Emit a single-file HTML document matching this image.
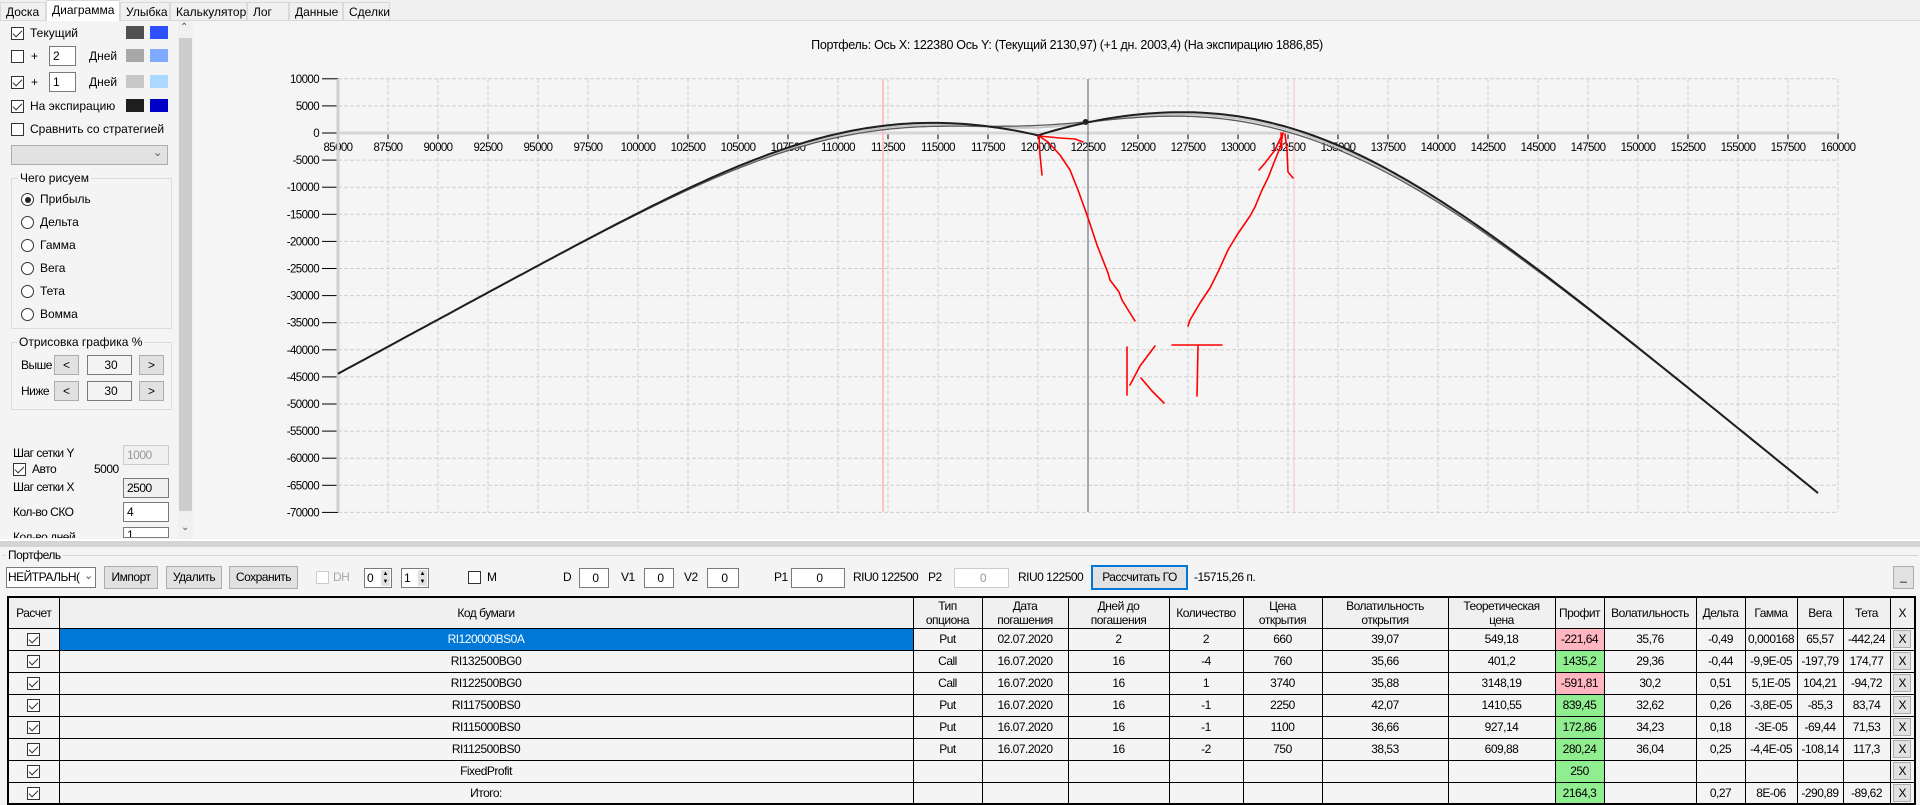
<!DOCTYPE html>
<html><head><meta charset="utf-8">
<style>
*{box-sizing:border-box;margin:0;padding:0}
body{width:1920px;height:803px;overflow:hidden;background:#f0f0f0;font-family:"Liberation Sans",sans-serif;font-size:12px;color:#000;position:relative}
.a{position:absolute;white-space:nowrap}
.n{font-family:"Liberation Sans Narrow","Liberation Sans",sans-serif;letter-spacing:-0.5px}
.cb{position:absolute;width:13px;height:13px;border:1px solid #333;background:#fff}
.cb.on::after{content:"";position:absolute;left:3px;top:0px;width:4px;height:8px;border:solid #333;border-width:0 1.5px 1.5px 0;transform:rotate(45deg)}
.inp{position:absolute;background:#fff;border:1px solid #7a7a7a;padding-left:3px;line-height:18px}
.btn{position:absolute;background:#e1e1e1;border:1px solid #adadad;text-align:center}
.rad{position:absolute;width:13px;height:13px;border:1px solid #333;border-radius:50%;background:#fff}
.rad.on::after{content:"";position:absolute;left:2.5px;top:2.5px;width:6px;height:6px;border-radius:50%;background:#222}
.grp{position:absolute;border:1px solid #dcdcdc}
.tab{position:absolute;top:2px;height:18px;border:1px solid #d9d9d9;border-bottom:none;background:#f0f0f0;padding:2px 5px 0 5px;font-size:12px}
table{border-collapse:collapse;position:absolute;left:7px;top:596px;width:1907px;table-layout:fixed;background:#f4f4f4;border:2px solid #000}
td{border:1px solid #000;height:22px;text-align:center;font-family:"Liberation Sans Narrow","Liberation Sans",sans-serif;letter-spacing:-0.5px;font-size:12px;padding:0;overflow:hidden;white-space:nowrap}
tr.h td{height:31px;background:#f0f0f0;line-height:14px}
.pk{background:#ffb6c1}.gr{background:#90ee90}
.sel{background:#0078d7;color:#fff}
.x{padding:1px}
.x span{display:block;background:#e1e1e1;border:1px solid #adadad;height:18px;line-height:17px;width:18px;margin:0 auto}
.tc{display:inline-block;width:13px;height:13px;border:1px solid #333;position:relative;vertical-align:middle;background:#fff}
.tc::after{content:"";position:absolute;left:3px;top:0;width:4px;height:8px;border:solid #333;border-width:0 1.5px 1.5px 0;transform:rotate(45deg)}
</style></head><body>

<div class="a" style="left:0;top:20px;width:1920px;height:1px;background:#d9d9d9"></div>
<div class="tab" style="left:0;width:46px">Доска</div>
<div class="tab" style="left:46px;top:0;height:21px;width:74px;background:#fff;z-index:2">Диаграмма</div>
<div class="tab" style="left:120px;width:50px">Улыбка</div>
<div class="tab" style="left:170px;width:77px">Калькулятор</div>
<div class="tab" style="left:247px;width:42px">Лог</div>
<div class="tab" style="left:289px;width:54px">Данные</div>
<div class="tab" style="left:343px;width:47px">Сделки</div>

<div class="a" style="left:193px;top:21px;width:1727px;height:518px;background:#f5f5f5"></div>
<div class="a" style="left:0;top:21px;width:178px;height:518px;background:#f4f4f4"></div>
<div class="a" style="left:178px;top:21px;width:15px;height:518px;background:#f0f0f0"></div>
<div class="a" style="left:179px;top:38px;width:13px;height:473px;background:#cdcdcd"></div>
<div class="a" style="left:180px;top:22px;font-size:10px;color:#555">&#8963;</div>
<div class="a" style="left:181px;top:522px;font-size:10px;color:#555">&#8964;</div>

<div class="cb on" style="left:11px;top:27px"></div><div class="a" style="left:30px;top:26px">Текущий</div>
<div class="a" style="left:126px;top:26px;width:18px;height:13px;background:#505050"></div><div class="a" style="left:150px;top:26px;width:18px;height:13px;background:#2f50ff"></div>
<div class="cb" style="left:11px;top:50px"></div><div class="a" style="left:31px;top:49px">+</div>
<div class="inp" style="left:49px;top:46px;width:27px;height:20px">2</div><div class="a" style="left:89px;top:49px">Дней</div>
<div class="a" style="left:126px;top:49px;width:18px;height:13px;background:#a8a8a8"></div><div class="a" style="left:150px;top:49px;width:18px;height:13px;background:#80aaff"></div>
<div class="cb on" style="left:11px;top:76px"></div><div class="a" style="left:31px;top:75px">+</div>
<div class="inp" style="left:49px;top:72px;width:27px;height:20px">1</div><div class="a" style="left:89px;top:75px">Дней</div>
<div class="a" style="left:126px;top:75px;width:18px;height:13px;background:#c8c8c8"></div><div class="a" style="left:150px;top:75px;width:18px;height:13px;background:#aad8ff"></div>
<div class="cb on" style="left:11px;top:100px"></div><div class="a" style="left:30px;top:99px">На экспирацию</div>
<div class="a" style="left:126px;top:99px;width:18px;height:13px;background:#1e1e1e"></div><div class="a" style="left:150px;top:99px;width:18px;height:13px;background:#0000c8"></div>
<div class="cb" style="left:11px;top:123px"></div><div class="a" style="left:30px;top:122px">Сравнить со стратегией</div>
<div class="a" style="left:11px;top:145px;width:157px;height:20px;background:#e2e2e2;border:1px solid #adadad"></div>
<div class="a" style="left:153px;top:146px;font-size:11px;color:#555">&#8964;</div>

<div class="grp" style="left:11px;top:178px;width:161px;height:151px"></div>
<div class="a" style="left:18px;top:171px;background:#f4f4f4;padding:0 2px">Чего рисуем</div>
<div class="rad on" style="left:21px;top:193px"></div><div class="a" style="left:40px;top:192px">Прибыль</div>
<div class="rad" style="left:21px;top:216px"></div><div class="a" style="left:40px;top:215px">Дельта</div>
<div class="rad" style="left:21px;top:239px"></div><div class="a" style="left:40px;top:238px">Гамма</div>
<div class="rad" style="left:21px;top:262px"></div><div class="a" style="left:40px;top:261px">Вега</div>
<div class="rad" style="left:21px;top:285px"></div><div class="a" style="left:40px;top:284px">Тета</div>
<div class="rad" style="left:21px;top:308px"></div><div class="a" style="left:40px;top:307px">Вомма</div>

<div class="grp" style="left:11px;top:342px;width:161px;height:68px"></div>
<div class="a" style="left:17px;top:335px;background:#f4f4f4;padding:0 2px">Отрисовка графика %</div>
<div class="a n" style="left:21px;top:358px">Выше</div>
<div class="btn" style="left:54px;top:355px;width:25px;height:20px;line-height:18px">&lt;</div>
<div class="inp" style="left:87px;top:355px;width:45px;height:20px;text-align:center;background:#f4f4f4">30</div>
<div class="btn" style="left:139px;top:355px;width:25px;height:20px;line-height:18px">&gt;</div>
<div class="a n" style="left:21px;top:384px">Ниже</div>
<div class="btn" style="left:54px;top:381px;width:25px;height:20px;line-height:18px">&lt;</div>
<div class="inp" style="left:87px;top:381px;width:45px;height:20px;text-align:center;background:#f4f4f4">30</div>
<div class="btn" style="left:139px;top:381px;width:25px;height:20px;line-height:18px">&gt;</div>

<div class="a n" style="left:13px;top:446px">Шаг сетки Y</div>
<div class="inp n" style="left:123px;top:445px;width:46px;height:20px;background:#f0f0f0;color:#999;border-color:#ccc">1000</div>
<div class="cb on" style="left:13px;top:463px"></div><div class="a n" style="left:32px;top:462px">Авто</div><div class="a n" style="left:94px;top:462px">5000</div>
<div class="a n" style="left:13px;top:480px">Шаг сетки X</div>
<div class="inp n" style="left:123px;top:478px;width:46px;height:20px;background:#f0f0f0">2500</div>
<div class="a n" style="left:13px;top:505px">Кол-во СКО</div>
<div class="inp n" style="left:123px;top:502px;width:46px;height:20px">4</div>
<div class="a n" style="left:13px;top:530px;height:8px;overflow:hidden">Кол-во дней</div>
<div class="inp n" style="left:123px;top:527px;width:46px;height:11px;overflow:hidden;line-height:14px">1</div>

<svg class="a" style="left:0;top:0" width="1920" height="540" id="ch">
<g id="grid"></g>
<text x="1067" y="49" text-anchor="middle" font-family="Liberation Sans,sans-serif" font-size="12.5" letter-spacing="-0.3">Портфель:  Ось X:  122380 Ось Y:   (Текущий 2130,97)   (+1 дн. 2003,4)   (На экспирацию 1886,85)</text>
<g id="curves"></g>
<g fill="none" stroke="#f00" stroke-width="1.6" stroke-linecap="round" stroke-linejoin="round">
<polyline points="1135,321 1130,313 1122,300 1119,292 1110,280 1108,273 1097,245 1087,215 1078,190 1070,170 1060,155 1048,142 1039,136"/>
<polyline points="1039,136 1060,138 1075,139 1083,142"/>
<polyline points="1039,136 1040,155 1042,175"/>
<polyline points="1188,326 1190,320 1200,303 1210,288 1218,272 1228,250 1237,235 1250,216 1255,207 1262,190 1268,178 1275,160 1280,148 1283,133"/>
<polyline points="1283,133 1275,150 1265,163 1259,170"/>
<polyline points="1285,134 1287,150 1288,172 1293,178"/>
<polyline points="1281,133 1282,148"/>
<polyline points="1127,347 1127,395"/>
<polyline points="1155,346 1140,366 1130,385"/>
<polyline points="1141,378 1152,391 1164,403"/>
<polyline points="1172,345 1222,345"/>
<polyline points="1198,346 1197,396"/>
</g>
</svg>

<div class="a" style="left:0;top:539px;width:1920px;height:2px;background:#fff"></div>
<div class="a" style="left:0;top:541px;width:1920px;height:6px;background:#d4d4d4"></div>
<div class="a" style="left:0;top:547px;width:1920px;height:256px;background:#f4f4f4"></div>
<div class="a" style="left:3px;top:555px;width:1915px;height:1px;background:#d4d4d4"></div>
<div class="a n" style="left:6px;top:548px;background:#f4f4f4;padding:0 2px">Портфель</div>

<div class="inp n" style="left:6px;top:567px;width:90px;height:21px;padding-left:1px;overflow:hidden">НЕЙТРАЛЬН(</div>
<div class="a" style="left:84px;top:569px;font-size:11px;color:#555;background:#fff">&#8964;</div>
<div class="btn n" style="left:104px;top:566px;width:54px;height:23px;line-height:21px">Импорт</div>
<div class="btn n" style="left:166px;top:566px;width:56px;height:23px;line-height:21px">Удалить</div>
<div class="btn n" style="left:229px;top:566px;width:69px;height:23px;line-height:21px">Сохранить</div>
<div class="cb" style="left:316px;top:571px;border-color:#ccc"></div><div class="a n" style="left:333px;top:570px;color:#aaa">DH</div>
<div class="inp n" style="left:364px;top:568px;width:28px;height:20px;padding-left:2px">0</div><div class="a" style="left:381px;top:570px;width:9px;height:16px;background:#e1e1e1;font-size:6px;line-height:8px;text-align:center">▲<br>▼</div>
<div class="inp n" style="left:401px;top:568px;width:28px;height:20px;padding-left:2px">1</div><div class="a" style="left:418px;top:570px;width:9px;height:16px;background:#e1e1e1;font-size:6px;line-height:8px;text-align:center">▲<br>▼</div>
<div class="cb" style="left:468px;top:571px"></div><div class="a n" style="left:487px;top:570px">M</div>
<div class="a n" style="left:563px;top:570px">D</div><div class="inp n" style="left:579px;top:568px;width:30px;height:20px;text-align:center">0</div>
<div class="a n" style="left:621px;top:570px">V1</div><div class="inp n" style="left:644px;top:568px;width:30px;height:20px;text-align:center">0</div>
<div class="a n" style="left:684px;top:570px">V2</div><div class="inp n" style="left:707px;top:568px;width:32px;height:20px;text-align:center">0</div>
<div class="a n" style="left:774px;top:570px">P1</div><div class="inp n" style="left:791px;top:568px;width:54px;height:20px;text-align:center">0</div>
<div class="a n" style="left:853px;top:570px">RIU0 122500</div>
<div class="a n" style="left:928px;top:570px">P2</div><div class="inp n" style="left:954px;top:568px;width:55px;height:20px;text-align:center;color:#999;border-color:#ccc">0</div>
<div class="a n" style="left:1018px;top:570px">RIU0 122500</div>
<div class="btn n" style="left:1091px;top:565px;width:97px;height:25px;line-height:21px;border:2px solid #0078d7">Рассчитать ГО</div>
<div class="a n" style="left:1194px;top:570px">-15715,26 п.</div>
<div class="btn" style="left:1893px;top:566px;width:21px;height:23px;line-height:18px">_</div>

<table>
<colgroup>
<col style="width:51px"><col style="width:854px"><col style="width:69px"><col style="width:86px"><col style="width:101px"><col style="width:74px"><col style="width:79px"><col style="width:126px"><col style="width:107px"><col style="width:49px"><col style="width:92px"><col style="width:49px"><col style="width:52px"><col style="width:46px"><col style="width:47px"><col style="width:25px">
</colgroup>
<tr class="h"><td>Расчет</td><td>Код бумаги</td><td>Тип<br>опциона</td><td>Дата<br>погашения</td><td>Дней до<br>погашения</td><td>Количество</td><td>Цена<br>открытия</td><td>Волатильность<br>открытия</td><td>Теоретическая<br>цена</td><td>Профит</td><td>Волатильность</td><td>Дельта</td><td>Гамма</td><td>Вега</td><td>Тета</td><td>X</td></tr>
<tr><td><span class="tc"></span></td><td class="sel">RI120000BS0A</td><td>Put</td><td>02.07.2020</td><td>2</td><td>2</td><td>660</td><td>39,07</td><td>549,18</td><td class="pk">-221,64</td><td>35,76</td><td>-0,49</td><td>0,000168</td><td>65,57</td><td>-442,24</td><td class="x"><span>X</span></td></tr>
<tr><td><span class="tc"></span></td><td>RI132500BG0</td><td>Call</td><td>16.07.2020</td><td>16</td><td>-4</td><td>760</td><td>35,66</td><td>401,2</td><td class="gr">1435,2</td><td>29,36</td><td>-0,44</td><td>-9,9E-05</td><td>-197,79</td><td>174,77</td><td class="x"><span>X</span></td></tr>
<tr><td><span class="tc"></span></td><td>RI122500BG0</td><td>Call</td><td>16.07.2020</td><td>16</td><td>1</td><td>3740</td><td>35,88</td><td>3148,19</td><td class="pk">-591,81</td><td>30,2</td><td>0,51</td><td>5,1E-05</td><td>104,21</td><td>-94,72</td><td class="x"><span>X</span></td></tr>
<tr><td><span class="tc"></span></td><td>RI117500BS0</td><td>Put</td><td>16.07.2020</td><td>16</td><td>-1</td><td>2250</td><td>42,07</td><td>1410,55</td><td class="gr">839,45</td><td>32,62</td><td>0,26</td><td>-3,8E-05</td><td>-85,3</td><td>83,74</td><td class="x"><span>X</span></td></tr>
<tr><td><span class="tc"></span></td><td>RI115000BS0</td><td>Put</td><td>16.07.2020</td><td>16</td><td>-1</td><td>1100</td><td>36,66</td><td>927,14</td><td class="gr">172,86</td><td>34,23</td><td>0,18</td><td>-3E-05</td><td>-69,44</td><td>71,53</td><td class="x"><span>X</span></td></tr>
<tr><td><span class="tc"></span></td><td>RI112500BS0</td><td>Put</td><td>16.07.2020</td><td>16</td><td>-2</td><td>750</td><td>38,53</td><td>609,88</td><td class="gr">280,24</td><td>36,04</td><td>0,25</td><td>-4,4E-05</td><td>-108,14</td><td>117,3</td><td class="x"><span>X</span></td></tr>
<tr><td><span class="tc"></span></td><td>FixedProfit</td><td></td><td></td><td></td><td></td><td></td><td></td><td></td><td class="gr">250</td><td></td><td></td><td></td><td></td><td></td><td class="x"><span>X</span></td></tr>
<tr><td><span class="tc"></span></td><td>Итого:</td><td></td><td></td><td></td><td></td><td></td><td></td><td></td><td class="gr">2164,3</td><td></td><td>0,27</td><td>8E-06</td><td>-290,89</td><td>-89,62</td><td class="x"><span>X</span></td></tr>
</table>

<script>
(function(){
function X(v){return 338+(v-85000)/50;}
function Y(p){return 133-p/5000*27.1;}
var g=document.getElementById('grid'),s="";
var F='font-family="Liberation Sans,sans-serif" font-size="11.5" letter-spacing="-0.6"';
for(var v=85000;v<=160000;v+=2500){var x=X(v);
 s+='<line x1="'+x+'" y1="79" x2="'+x+'" y2="512" stroke="#cfcfcf" stroke-dasharray="4,2"/>';
 s+='<line x1="'+x+'" y1="133" x2="'+x+'" y2="139" stroke="#000"/>';
 s+='<text x="'+x+'" y="151" text-anchor="middle" '+F+'>'+v+'</text>';}
for(var p=10000;p>=-70000;p-=5000){var y=Y(p);
 s+='<line x1="338" y1="'+y+'" x2="1838" y2="'+y+'" stroke="#cfcfcf" stroke-dasharray="4,2"/>';
 s+='<line x1="322" y1="'+y+'" x2="338" y2="'+y+'" stroke="#000"/>';
 s+='<text x="319" y="'+(y+4)+'" text-anchor="end" '+F+'>'+p+'</text>';}
s+='<line x1="338" y1="79" x2="338" y2="512" stroke="#d0d0d0" stroke-width="3"/>';
s+='<line x1="338" y1="133" x2="1838" y2="133" stroke="#d6d6d6" stroke-width="3"/>';
s+='<line x1="883" y1="79" x2="883" y2="512" stroke="#ffc0c8" stroke-width="2"/>';
s+='<line x1="1294" y1="79" x2="1294" y2="512" stroke="#ffc0c8" stroke-width="1"/>';
s+='<line x1="1088" y1="79" x2="1088" y2="512" stroke="#6a7a8e" stroke-width="1.2"/>';
g.innerHTML=s;
function N(x){var t=1/(1+0.2316419*Math.abs(x));var d=0.3989423*Math.exp(-x*x/2);var pr=d*t*(0.3193815+t*(-0.3565638+t*(1.781478+t*(-1.821256+t*1.330274))));return x>0?1-pr:pr;}
function bs(c,S,K,T,v){if(T<=0)return c?Math.max(S-K,0):Math.max(K-S,0);var sq=v*Math.sqrt(T);var d1=(Math.log(S/K)+0.5*v*v*T)/sq,d2=d1-sq;return c?S*N(d1)-K*N(d2):K*N(-d2)-S*N(-d1);}
var pos=[[0,120000,2,660,.3576,2],[1,132500,-4,760,.2936,16],[1,122500,1,3740,.302,16],[0,117500,-1,2250,.3262,16],[0,115000,-1,1100,.3423,16],[0,112500,-2,750,.3604,16]];
function pnl(S,shift){var t=250;for(var i=0;i<pos.length;i++){var o=pos[i];t+=o[2]*(bs(o[0]==1,S,o[1],(o[5]-shift)/365,o[4])-o[3]);}return t;}
function path(shift){var d="";for(var S=85000;S<=159000;S+=250){d+=(S==85000?"M":"L")+X(S).toFixed(1)+","+Y(pnl(S,shift)).toFixed(1);}return d;}
var c=document.getElementById('curves');
c.innerHTML='<path d="'+path(1)+'" fill="none" stroke="#c4c4c4" stroke-width="2"/>'+
'<path d="'+path(0)+'" fill="none" stroke="#5a5a5a" stroke-width="1.3"/>'+
'<path d="'+path(2)+'" fill="none" stroke="#1e1e1e" stroke-width="2"/>'+
'<circle cx="'+X(122380)+'" cy="'+Y(pnl(122380,0))+'" r="3" fill="#222"/>';
})();
</script>
</body></html>
